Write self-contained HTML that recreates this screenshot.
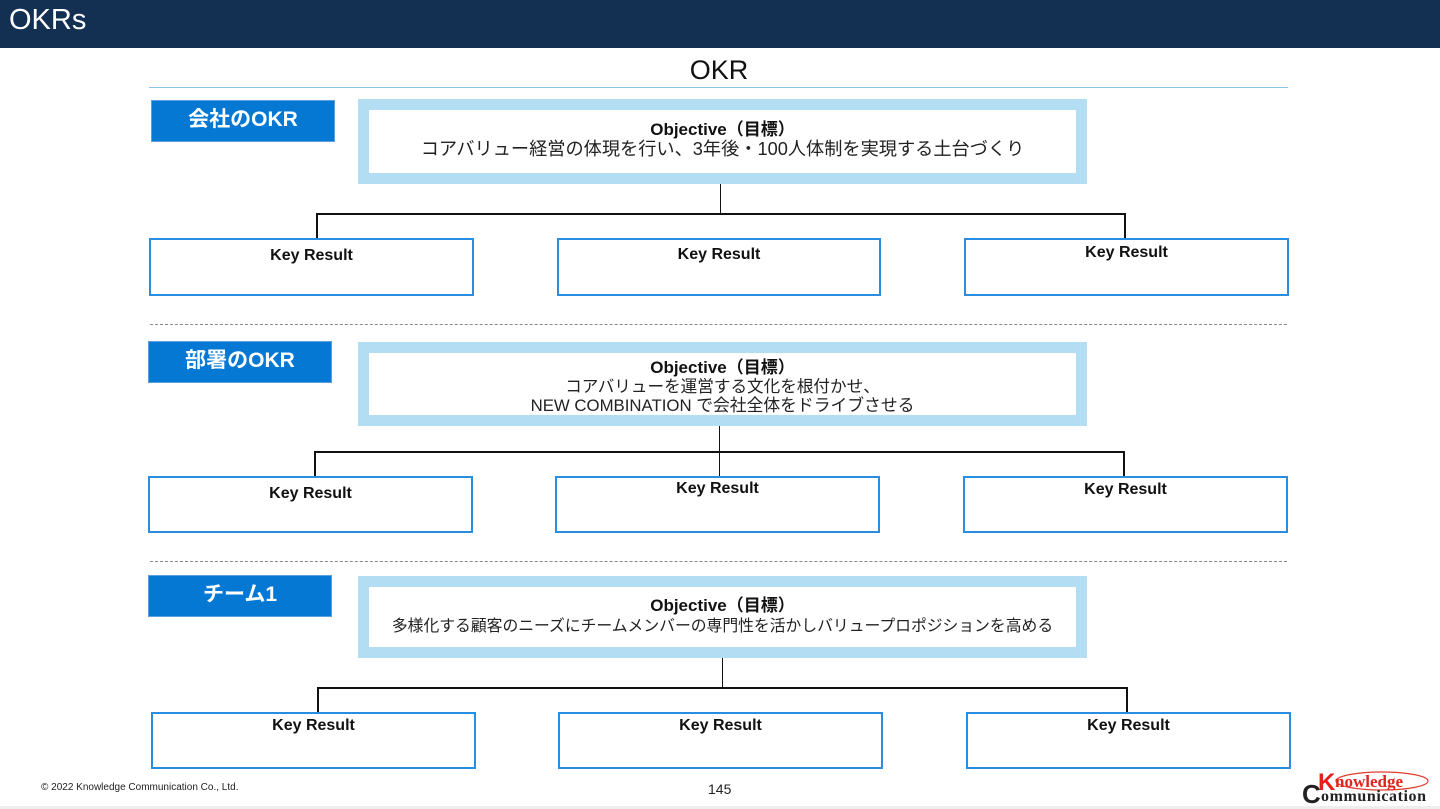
<!DOCTYPE html>
<html><head><meta charset="utf-8"><style>
*{margin:0;padding:0;box-sizing:border-box}
body{width:1440px;height:809px;position:relative;background:#fff;font-family:"Liberation Sans","Noto Sans CJK JP",sans-serif;overflow:hidden}
.a{position:absolute}
.hdr{left:0;top:0;width:1440px;height:48px;background:#132f52;color:#fff;font-size:29px;padding:4px 0 0 9px}
.lab{background:#0578d4;border:1px solid #5aa0e0;color:#fff;font-weight:bold;font-size:21px;text-align:center;line-height:38px}
.obj{border:11px solid #b3ddf2;background:#fff;text-align:center;font-size:17px;color:#222;line-height:19.5px;white-space:nowrap}
.obj b{font-size:17px;color:#111}
.kr{border:2px solid #2a8de0;background:#fff;text-align:center;font-weight:bold;font-size:16px;color:#111;padding-top:7px}
.ln{background:#111}
.dash{height:0;border-top:1.5px dashed #888}
</style></head><body>
<div class="a hdr">OKRs</div>
<div class="a" style="left:0;width:1438px;top:55px;text-align:center;font-size:27px;color:#111">OKR</div>
<div class="a" style="left:149px;top:87px;width:1139px;height:1px;background:#8cc4e8"></div>

<!-- section 1 -->
<div class="a lab" style="left:151px;top:100px;width:184px;height:42px">会社のOKR</div>
<div class="a obj" style="left:358px;top:99px;width:729px;height:85px;padding-top:10px"><b>Objective（目標）</b><br><span style="font-size:18.2px">コアバリュー経営の体現を行い、3年後・100人体制を実現する土台づくり</span></div>
<div class="a ln" style="left:720px;top:184px;width:1px;height:30px"></div>
<div class="a ln" style="left:316px;top:213px;width:810px;height:2px"></div>
<div class="a ln" style="left:316px;top:213px;width:2px;height:25px"></div>
<div class="a ln" style="left:1124px;top:213px;width:2px;height:25px"></div>
<div class="a kr" style="left:149px;top:238px;width:325px;height:58px">Key Result</div>
<div class="a kr" style="left:557px;top:238px;width:324px;height:58px;padding-top:6px">Key Result</div>
<div class="a kr" style="left:964px;top:238px;width:325px;height:58px;padding-top:4px">Key Result</div>
<div class="a dash" style="left:150px;top:324px;width:1137px"></div>

<!-- section 2 -->
<div class="a lab" style="left:148px;top:341px;width:184px;height:42px">部署のOKR</div>
<div class="a obj" style="left:358px;top:342px;width:729px;height:84px;padding-top:5px;line-height:19px"><b>Objective（目標）</b><br><span style="font-size:16.6px">コアバリューを運営する文化を根付かせ、</span><br><span style="font-size:16.8px">NEW COMBINATION で会社全体をドライブさせる</span></div>
<div class="a ln" style="left:719px;top:426px;width:1px;height:50px"></div>
<div class="a ln" style="left:314px;top:451px;width:811px;height:2px"></div>
<div class="a ln" style="left:314px;top:451px;width:2px;height:25px"></div>
<div class="a ln" style="left:1123px;top:451px;width:2px;height:25px"></div>
<div class="a kr" style="left:148px;top:476px;width:325px;height:57px">Key Result</div>
<div class="a kr" style="left:555px;top:476px;width:325px;height:57px;padding-top:2px">Key Result</div>
<div class="a kr" style="left:963px;top:476px;width:325px;height:57px;padding-top:3px">Key Result</div>
<div class="a dash" style="left:150px;top:561px;width:1137px"></div>

<!-- section 3 -->
<div class="a lab" style="left:148px;top:575px;width:184px;height:42px">チーム1</div>
<div class="a obj" style="left:358px;top:576px;width:729px;height:82px;padding-top:9px"><b>Objective（目標）</b><br><span style="font-size:15.8px">多様化する顧客のニーズにチームメンバーの専門性を活かしバリュープロポジションを高める</span></div>
<div class="a ln" style="left:722px;top:658px;width:1px;height:30px"></div>
<div class="a ln" style="left:317px;top:687px;width:811px;height:2px"></div>
<div class="a ln" style="left:317px;top:687px;width:2px;height:25px"></div>
<div class="a ln" style="left:1126px;top:687px;width:2px;height:25px"></div>
<div class="a kr" style="left:151px;top:712px;width:325px;height:57px;padding-top:3px">Key Result</div>
<div class="a kr" style="left:558px;top:712px;width:325px;height:57px;padding-top:3px">Key Result</div>
<div class="a kr" style="left:966px;top:712px;width:325px;height:57px;padding-top:3px">Key Result</div>

<div class="a" style="left:41px;top:782px;font-size:10px;color:#222">© 2022 Knowledge Communication Co., Ltd.</div>
<div class="a" style="left:708px;top:781px;font-size:14px;color:#222">145</div>
<div class="a" style="left:0;top:806px;width:1440px;height:3px;background:#eee"></div>
<svg class="a" style="left:1300px;top:768px" width="132" height="38" viewBox="0 0 132 38">
<ellipse cx="82" cy="13" rx="46" ry="9" fill="none" stroke="#e23b2e" stroke-width="1.2"/>
<text x="2" y="35" font-family="Liberation Sans,sans-serif" font-weight="bold" font-size="26" fill="#222">C</text>
<text x="18" y="22" font-family="Liberation Sans,sans-serif" font-weight="bold" font-size="24" fill="#e2231a">K</text>
<text x="35" y="19" font-family="Liberation Serif,serif" font-weight="bold" font-size="17" fill="#e2231a">nowledge</text>
<text x="21" y="33" font-family="Liberation Serif,serif" font-weight="bold" font-size="16" fill="#222" textLength="105">ommunication</text>
</svg>
</body></html>
